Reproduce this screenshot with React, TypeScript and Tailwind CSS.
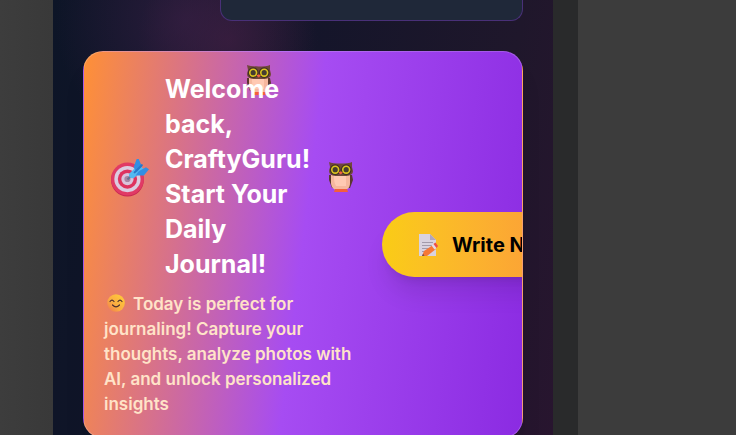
function Target() {
  return (
    <svg viewBox="0 0 38 38" className="ml-1.5 size-[39px] shrink-0" aria-hidden="true">
      <circle cx="17" cy="21.5" r="16" fill="#c92652" />
      <circle cx="17" cy="20.5" r="16" fill="#e13a65" />
      <circle cx="17" cy="20.5" r="12.8" fill="#dccbe0" />
      <circle cx="17" cy="20.5" r="9.4" fill="#de335f" />
      <circle cx="17" cy="20.5" r="6" fill="#d9c4dc" />
      <circle cx="17" cy="20.5" r="3" fill="#a887a5" />
      <path d="M17 21L25 13" stroke="#69748e" strokeWidth="2" />
      <path d="M19 15L28 6l5 5-9 8c-3 2-7-1-5-4z" fill="#52b9f1" />
      <path d="M23 9l3-8 2 0 3 7-5 6zM28 13l7-4 3 2-5 6-8 0z" fill="#338fe2" />
      <path d="M24 14l7-7" stroke="#2777c9" strokeWidth="2" strokeLinecap="round" />
    </svg>
  );
}

function Owl({ className }: { className: string }) {
  return (
    <svg viewBox="0 0 26 32" className={className} aria-hidden="true">
      <path d="M1 14h23l1 5-3 8H4l-3-8z" fill="#5b382f" />
      <path d="M3 14h19v8c0 4-2 7-6 7h-7c-4 0-6-4-6-7z" fill="#f6b79e" />
      <path d="M6 15h12v10H8c-2-3-2-7-2-10z" fill="#ffc9b3" />
      <path d="M7 28h12l1 3H6z" fill="#f45e3c" />
      <path d="M1 1c4 2 19 2 23 0v5l1 4c0 4-4 5-8 5H9c-4 0-8-1-8-5l1-4z" fill="#70473a" />
      <circle cx="7.2" cy="8.7" r="5.4" fill="#403026" />
      <circle cx="18.2" cy="8.7" r="5.4" fill="#403026" />
      <circle cx="7.2" cy="8.7" r="3.4" fill="#453d30" stroke="#dcc41d" strokeWidth="1.6" />
      <circle cx="18.2" cy="8.7" r="3.4" fill="#453d30" stroke="#dcc41d" strokeWidth="1.6" />
      <path d="M10.500 11.500q2-2 4.400 0l-2.200 2z" fill="#f56140" />
    </svg>
  );
}

function Smile() {
  return (
    <svg viewBox="0 0 18 18" className="mr-2 ml-[3px] inline-block size-[18px] align-[-2px]" aria-hidden="true">
      <defs>
        <linearGradient id="face" x1="1" y1="0" x2="0" y2="1">
          <stop stopColor="#ffd038" />
          <stop offset="0.6" stopColor="#fbab42" />
          <stop offset="1" stopColor="#ee7450" />
        </linearGradient>
      </defs>
      <circle cx="9" cy="9" r="8.8" fill="url(#face)" />
      <path d="M3 7.500q2-2.800 4 0M11 7.500q2-2.800 4 0M5.500 11q3.500 3.600 7 0" fill="none" stroke="#50302f" strokeWidth="1.2" strokeLinecap="round" />
    </svg>
  );
}

function Memo() {
  return (
    <svg viewBox="0 0 20 22" className="size-[22px] shrink-0" aria-hidden="true">
      <path d="M0 0h11l6 6v16H0z" fill="#d9d2df" />
      <path d="M11 0l6 6h-6z" fill="#b0a5bd" />
      <path d="M3 8.500h11M3 11.500h11M3 14.500h8M3 17.500h4" stroke="#a39bab" strokeWidth="1" />
      <path d="M3 22l2-5 9-6 3 4-9 7z" fill="#f67836" />
      <path d="M12.500 11.500l2-1.500 3 4-2 1.500z" fill="#e4dce7" />
      <path d="M14.500 10l2-1.500 2.500 3.500-1.500 2z" fill="#ed4f47" />
      <path d="M3 22l1-2 1.500 1.400z" fill="#53404c" />
    </svg>
  );
}

export default function App() {
  return (
    <div className="flex h-screen overflow-hidden bg-[#3c3c3c] font-['Inter',sans-serif]">
      <div className="w-[53px] shrink-0 bg-linear-to-r from-[#3d3d3d] to-[#393939]" />
      <main className="min-w-0 max-w-[500px] flex-1 bg-[radial-gradient(circle_at_132px_20px,#3b204899_0,#3b204800_130px),radial-gradient(circle_at_175px_40px,#3b1c3acc_0,#3b1c3a00_90px),linear-gradient(100deg,#0d1527_0%,#14152a_45%,#1f172b_82%,#28152f_100%)] px-[30px]">
        <div className="ml-auto h-[21px] w-[303px] rounded-b-xl border border-t-0 border-[#493078] bg-[#1f2839]" />
        <section className="relative mt-[30px] flex items-center gap-6 overflow-hidden rounded-[20px] border border-white/20 bg-[linear-gradient(97deg,#ff9036_0%,#a64cf2_50%,#8b2be2_100%)] p-5 shadow-xl">
          <Owl className="absolute top-3 left-[162px] h-8 w-[26px]" />
          <div className="relative w-[254px] shrink-0">
            <div className="flex items-center">
              <Target />
              <h1 className="ml-4 w-[146px] shrink-0 text-[25px] leading-[35px] font-bold text-white">
                Welcome back, CraftyGuru! Start Your Daily Journal!
              </h1>
              <Owl className="ml-[17px] h-8 w-[26px] shrink-0" />
            </div>
            <p className="mt-[10px] text-[17px] leading-[25px] font-semibold text-[#ffe3c8]">
              <Smile />
              Today is perfect for journaling! Capture your thoughts, analyze photos with AI, and unlock personalized insights
            </p>
          </div>
          <button type="button" className="flex h-[65px] shrink-0 items-center gap-3 rounded-full bg-linear-to-r from-[#facc15] to-[#fb923c] px-9 text-xl font-bold whitespace-nowrap text-black shadow-xl">
            <Memo />
            Write Now
          </button>
        </section>
      </main>
      <div className="w-[25px] shrink-0 bg-[#292a2b]" />
    </div>
  );
}
